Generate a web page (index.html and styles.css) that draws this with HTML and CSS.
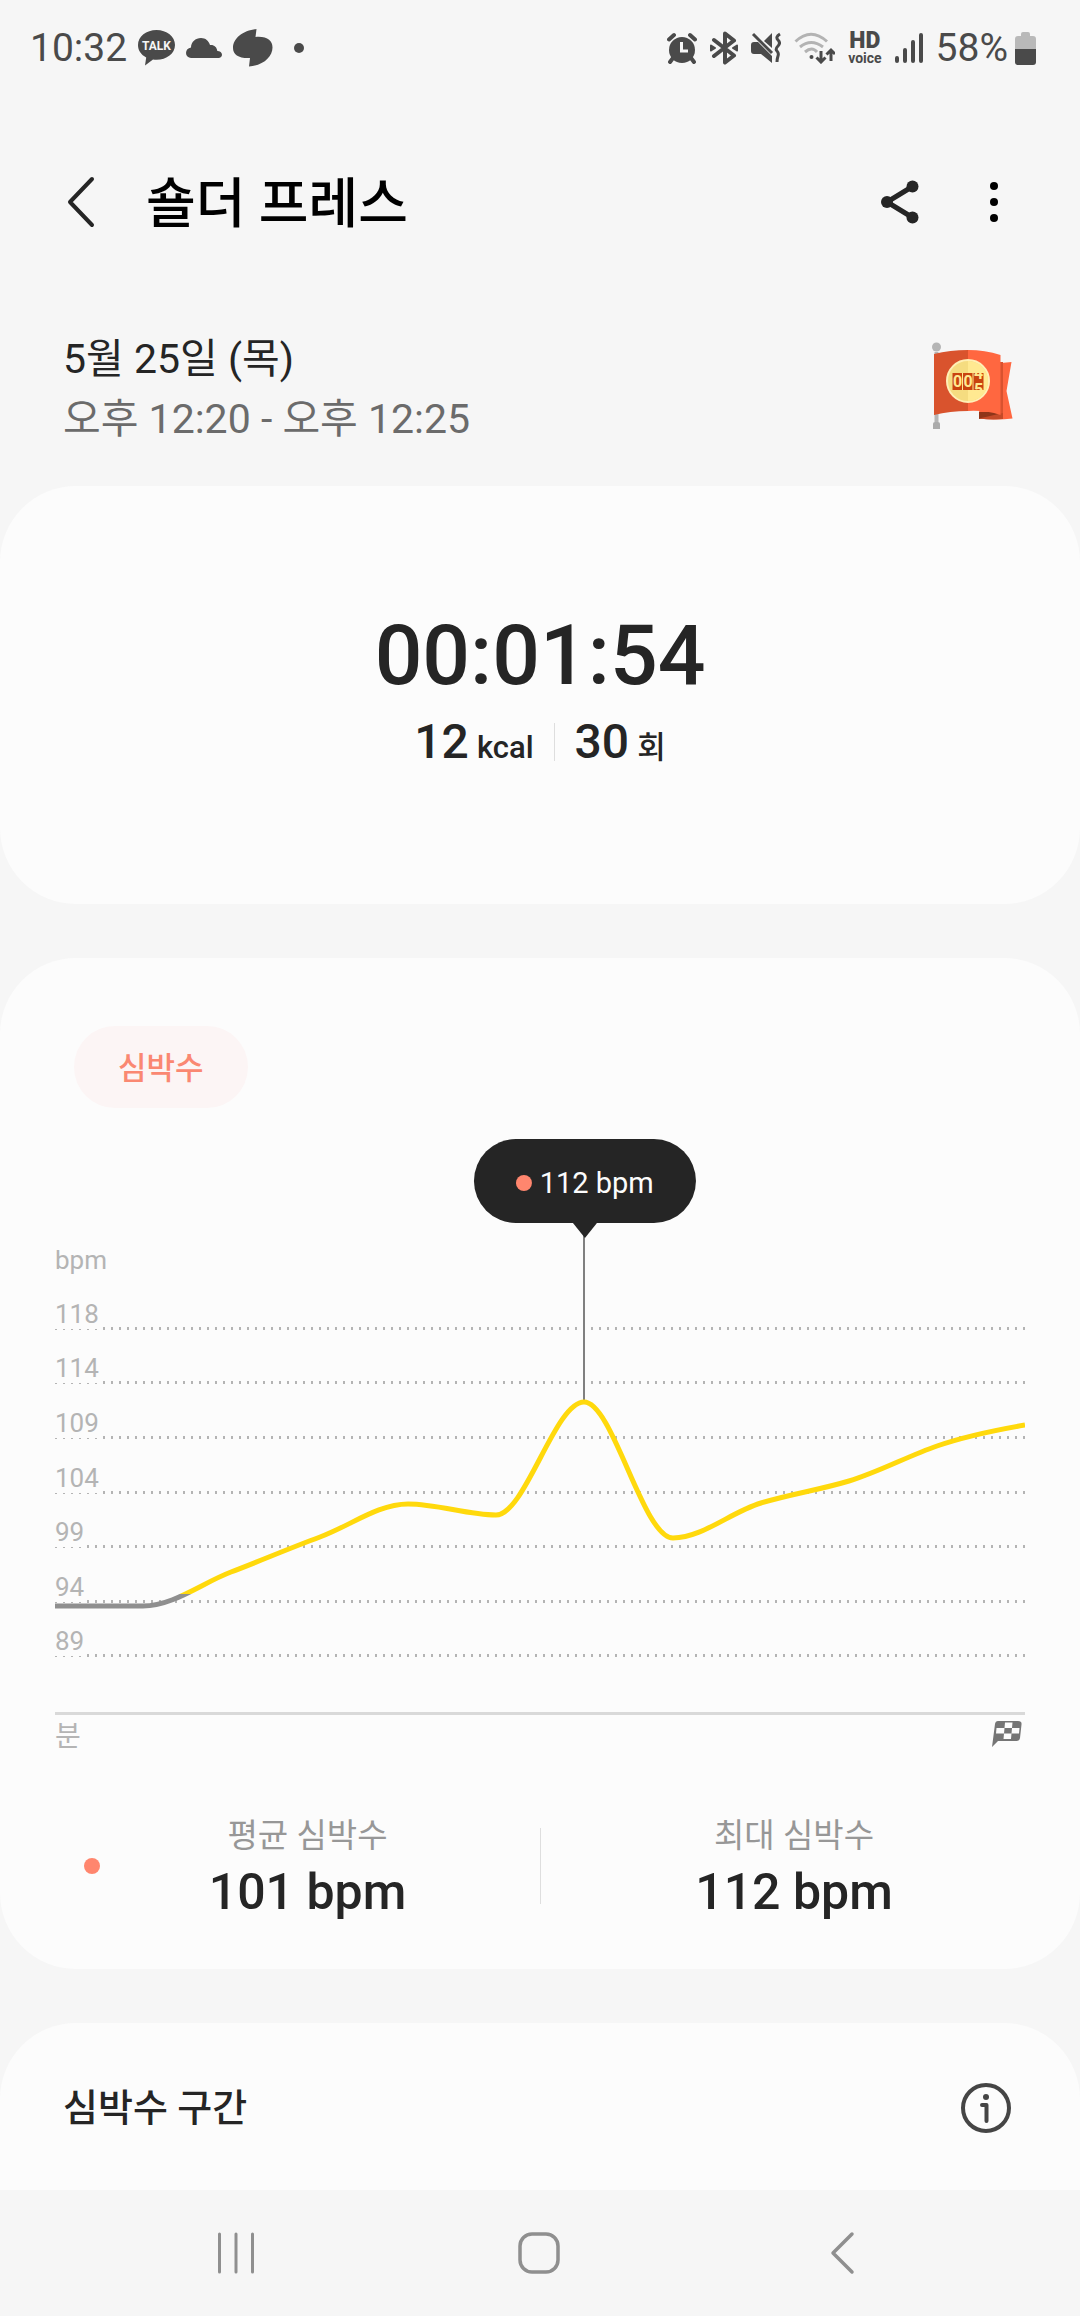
FILE: index.html
```html
<!DOCTYPE html>
<html lang="ko">
<head>
  <meta charset="UTF-8">
  <meta name="viewport" content="width=device-width, initial-scale=1.0">
  <title>숄더 프레스</title>
  <link rel="stylesheet" href="styles.css">
</head>
<body>
  <!-- Status bar -->
  <div class="status-bar">
    <div class="status-left">
      <span class="status-text">10:32</span>
      <svg class="talk-icon" width="37" height="36" viewBox="0 0 37 36">
        <path d="M18.500 0C8.300 0 0 6.500 0 15c0 5.500 3.200 9.800 8.200 12.400L7 35.500l8-6c1.200.2 2.300.3 3.500.3C28.700 29.800 37 23.500 37 15S28.700 0 18.500 0z" fill="#4a4a4a"/>
        <text x="18.500" y="20" text-anchor="middle" class="talk-text">TALK</text>
      </svg>
      <svg class="cloud-icon" width="36" height="20" viewBox="0 0 36 20">
        <path d="M5 20a5 5 0 0 1-5-5c0-3 2-5 5-5.500C5 4 9.500 0 15 0c4.500 0 7.800 2.800 9 7 4-.5 7 2.200 7.300 6C34 13 36 14.500 36 16.800 36 18.700 34.500 20 32.500 20z" fill="#4a4a4a"/>
      </svg>
      <svg class="leaf-icon" width="40" height="38" viewBox="0 0 40 38">
        <path d="M23.500 0 22.500 8C34 7 39.500 11.500 39.500 18.500 39.500 28 30 36.500 16 37.500L17 29C6 29.500 0 26 0 19 0 9.500 10 1.500 23.500 0z" fill="#4a4a4a"/>
      </svg>
      <span class="more-dot"></span>
    </div>
    <div class="status-right">
      <svg width="30" height="32" viewBox="0 0 30 32">
        <path d="M2 7.500 7 3M28 7.500 23 3M6 26l-3 4M24 26l3 4" stroke="#4a4a4a" stroke-width="4" stroke-linecap="round"/>
        <circle cx="15" cy="18" r="13" fill="#4a4a4a"/>
        <path d="M14.500 10v9H21" fill="none" stroke="#f6f6f6" stroke-width="3"/>
      </svg>
      <svg width="28" height="34" viewBox="0 0 28 34">
        <path d="M4 9l20 15.500-9 7V2.500l9 7L4 25" fill="none" stroke="#4a4a4a" stroke-width="4" stroke-linejoin="round" stroke-linecap="round"/>
        <path d="M1 14.500l4 2.500-4 2.500zM27 14.500 23 17l4 2.500z" fill="#4a4a4a" stroke="#4a4a4a" stroke-width="2" stroke-linejoin="round"/>
      </svg>
      <svg width="30" height="32" viewBox="0 0 30 32">
        <path d="M0 13q0-3 3-3h4l14 14v7l-11-9H3q-3 0-3-3zM13 9l8-8v15z" fill="#4a4a4a"/>
        <path d="M2 2l19 19" stroke="#4a4a4a" stroke-width="3"/>
        <path d="M29 2q-5 3-2 6t0 6-1 5 1 5-1 6" fill="none" stroke="#4a4a4a" stroke-width="3"/>
      </svg>
      <svg width="41" height="32" viewBox="0 0 41 32">
        <path d="M1.500 9.500Q17-5 33 9.500M6 15q11-9 23 0M11 20q7-6 12 0" fill="none" stroke="#b3b3b3" stroke-width="3"/>
        <circle cx="17.500" cy="25" r="2" fill="#4a4a4a"/>
        <path d="M27 19v10M22.500 25.500l4.500 4.500 4.500-4.500M37 29V19M32.500 22.500 37 18l4 4" fill="none" stroke="#4a4a4a" stroke-width="3"/>
      </svg>
      <div class="hd-voice"><b>HD</b><span>voice</span></div>
      <svg width="28" height="30" viewBox="0 0 28 30">
        <path d="M2 25v3M10 17v11M18 9v19M26 2v26" stroke="#4a4a4a" stroke-width="4" stroke-linecap="round"/>
      </svg>
      <span class="status-text battery-text">58%</span>
      <svg width="21" height="33" viewBox="0 0 21 33">
        <path d="M6 4V2q0-2 2-2h5q2 0 2 2v2h3q3 0 3 3v10H0V7q0-3 3-3z" fill="#b9b9b9"/>
        <path d="M0 17h21v13q0 3-3 3H3q-3 0-3-3z" fill="#4a4a4a"/>
      </svg>
    </div>
  </div>

  <!-- App bar -->
  <header class="app-bar">
    <button class="icon-button" aria-label="뒤로">
      <svg width="30" height="52" viewBox="0 0 30 52">
        <path d="M26 3 4 26l22 23" fill="none" stroke="#252525" stroke-width="4" stroke-linecap="round" stroke-linejoin="round"/>
      </svg>
    </button>
    <h1>숄더 프레스</h1>
    <button class="icon-button share" aria-label="공유">
      <svg width="38" height="44" viewBox="0 0 38 44">
        <path d="M31.500 6.500 6 22l25.500 15.500" fill="none" stroke="#252525" stroke-width="5"/>
        <circle cx="31.500" cy="6.500" r="6" fill="#252525"/>
        <circle cx="6" cy="22" r="6" fill="#252525"/>
        <circle cx="31.500" cy="37.500" r="6" fill="#252525"/>
      </svg>
    </button>
    <button class="icon-button" aria-label="더보기">
      <svg width="10" height="44" viewBox="0 0 10 44">
        <circle cx="5" cy="6" r="4"/>
        <circle cx="5" cy="22" r="4"/>
        <circle cx="5" cy="38" r="4"/>
      </svg>
    </button>
  </header>

  <!-- Date and goal badge -->
  <section class="session">
    <div class="session-when">
      <p class="session-date">5월 25일 (목)</p>
      <p class="session-time">오후 12:20 - 오후 12:25</p>
    </div>
    <svg width="82" height="88" viewBox="0 0 82 88">
      <path d="M48 22q16 0 31.500-2L74.500 49l6 27.500q-16 2-33.500 0z" fill="#ff6740"/>
      <path d="M68 20h3v57h-3z" fill="#d9522f"/>
      <path d="M47 70h21v4l-21 3z" fill="#8f3519"/>
      <path d="M47 76.500q12 1.500 24 .5V71z" fill="#c44a28"/>
      <path d="M2.500 10h4v70h-4z" fill="#b5b5b5"/>
      <circle cx="4.500" cy="5" r="4.500" fill="#b5b5b5"/>
      <path d="M1 82q0-2 2-2h3q2 0 2 2v5H1z" fill="#ababab"/>
      <path d="M2 12Q18 8 36 8v61q-18 0-34 4z" fill="#d9532d"/>
      <path d="M36 8q17 0 32.500 5v60Q53 68 36 69z" fill="#ff6740"/>
      <circle cx="36" cy="39" r="21" fill="#f5dc80" stroke="#ffefb5" stroke-width="2"/>
      <path d="M36 19a20 20 0 0 1 0 40z" fill="#ffe991"/>
      <path d="M20.500 31h31v17h-31z" fill="#c9430f"/>
      <path d="M30.500 31v17M41 31v17" stroke="#ffe991"/>
      <text x="21" y="45" class="flag-digit">0</text>
      <text x="31.500" y="45" class="flag-digit">0</text>
      <svg x="41" y="31" width="11" height="17">
        <text x="1" y="6" class="flag-digit">4</text>
        <text x="1" y="22" class="flag-digit">5</text>
      </svg>
    </svg>
  </section>

  <main>
    <!-- Duration -->
    <section class="card summary">
      <div class="duration">00:01:54</div>
      <div class="totals">
        <span class="total">12 <small>kcal</small></span>
        <i class="divider"></i>
        <span class="total">30 <small>회</small></span>
      </div>
    </section>

    <!-- Heart rate chart -->
    <section class="card heart-rate">
      <button class="chip">심박수</button>
      <div class="chart">
        <div class="unit">bpm</div>
        <div class="plot">
          <ul class="grid">
            <li><span>118</span></li>
            <li><span>114</span></li>
            <li><span>109</span></li>
            <li><span>104</span></li>
            <li><span>99</span></li>
            <li><span>94</span></li>
            <li><span>89</span></li>
            <li></li>
          </ul>
          <div class="marker">
            <div class="bubble"><i class="dot"></i>112 bpm</div>
          </div>
          <svg class="line" viewBox="0 0 970 437" preserveAspectRatio="none">
            <defs>
              <linearGradient id="zone" gradientUnits="userSpaceOnUse" x1="0" y1="0" x2="0" y2="437">
                <stop offset="0.730" stop-color="#ffd90c"/>
                <stop offset="0.730" stop-color="#8f8f8f"/>
              </linearGradient>
            </defs>
            <path d="M0 331H88C118 331 147 308 176 297S235 273 265 262 323 229 353 229 412 240 441 240C470 240 500 127 529 127S588 263 618 263C647 263 676 237 706 228S764 215 794 206 853 181 882 171 941 155 970 150" fill="none" stroke="url(#zone)" stroke-width="5"/>
          </svg>
        </div>
        <div class="x-axis">
          <span>분</span>
          <svg width="32" height="28" viewBox="0 0 32 28">
            <path d="M7 1h20q4 0 3.500 3.500L29 18q-.5 3-3.500 3H7l-6 6L4 4q.5-3 3-3z" fill="#757575"/>
            <path d="M14 2.500h7.500L21 8h-7.500zM5.500 8h8l-.5 5.500H5zM21 8h7.500l-.5 5.500h-7.500zM13 13.500h7.500L20 19h-7.500z" fill="#fcfcfc"/>
          </svg>
        </div>
      </div>
      <div class="stats">
        <div class="stat average">
          <i class="dot"></i>
          <dl>
            <dt>평균 심박수</dt>
            <dd>101 bpm</dd>
          </dl>
        </div>
        <div class="stat maximum">
          <i class="divider"></i>
          <dl>
            <dt>최대 심박수</dt>
            <dd>112 bpm</dd>
          </dl>
        </div>
      </div>
    </section>

    <!-- Heart rate zones -->
    <section class="card zones">
      <h2>심박수 구간</h2>
      <button class="icon-button" aria-label="정보">
        <svg width="54" height="54" viewBox="0 0 54 54">
          <circle cx="27" cy="27" r="23" fill="none" stroke="#454545" stroke-width="4"/>
          <circle cx="27" cy="16" r="3" fill="#454545"/>
          <path d="M23 24h4.500v16" fill="none" stroke="#454545" stroke-width="4" stroke-linecap="round" stroke-linejoin="round"/>
        </svg>
      </button>
    </section>
  </main>

  <!-- System navigation -->
  <nav class="nav-bar">
    <button class="icon-button" aria-label="최근 앱">
      <svg width="38" height="44" viewBox="0 0 38 44">
        <path d="M2.500 3v38M19 3v38M35.500 3v38" stroke="#8f8f8f" stroke-width="3" stroke-linecap="round"/>
      </svg>
    </button>
    <button class="icon-button" aria-label="홈">
      <svg width="44" height="44" viewBox="0 0 44 44">
        <rect x="3" y="3" width="38" height="38" rx="12" fill="none" stroke="#8f8f8f" stroke-width="3.500"/>
      </svg>
    </button>
    <button class="icon-button" aria-label="뒤로 가기">
      <svg width="26" height="44" viewBox="0 0 26 44">
        <path d="M23 3 4 22l19 19" fill="none" stroke="#8f8f8f" stroke-width="3.500" stroke-linecap="round" stroke-linejoin="round"/>
      </svg>
    </button>
  </nav>
</body>
</html>
```

FILE: styles.css
```css
* {
  box-sizing: border-box;
}
body {
  margin: 0;
  min-height: 100vh;
  display: flex;
  flex-direction: column;
  background-color: #f6f6f6;
  color: #252525;
  font-family: Roboto, "Noto Sans CJK KR", sans-serif;
}
h1, h2, p, ul, dl, dd {
  margin: 0;
  padding: 0;
}
svg {
  display: block;
  flex: none;
}
button {
  padding: 0;
  border: none;
  background: none;
  font-family: inherit;
  cursor: pointer;
}

/* Status bar */
.status-bar {
  display: flex;
  justify-content: space-between;
  align-items: center;
  height: 96px;
  padding: 0 44px 0 30px;
  color: #4a4a4a;
}
.status-left,
.status-right {
  display: flex;
  align-items: center;
}
.status-left {
  gap: 11px;
}
.status-right {
  gap: 13px;
}
.status-text {
  font-size: 39px;
  line-height: 48px;
}
.battery-text {
  margin-right: -6px;
}
.talk-text {
  font-size: 12px;
  font-weight: 700;
  fill: #f6f6f6;
}
.more-dot {
  width: 10px;
  height: 10px;
  margin-left: 10px;
  border-radius: 50%;
  background-color: #4a4a4a;
}
.hd-voice {
  display: flex;
  flex-direction: column;
  align-items: center;
  font-size: 14px;
  font-weight: 700;
  line-height: 14px;
}
.hd-voice b {
  font-size: 23px;
  font-weight: 900;
  line-height: 20px;
}

/* App bar */
.app-bar {
  display: flex;
  align-items: center;
  height: 211px;
  padding: 0 81px 0 66px;
}
.app-bar h1 {
  flex: 1;
  margin-left: 50px;
  padding-top: 6px;
  color: #000;
  font-size: 54px;
  font-weight: 500;
  line-height: 72px;
}
.app-bar .share {
  margin-right: 70px;
}

/* Session date */
.session {
  display: flex;
  justify-content: space-between;
  align-items: center;
  height: 179px;
  padding: 0 66px 22px 63px;
}
.session-when {
  padding-top: 6px;
}
.session p {
  font-size: 41px;
  line-height: 60px;
}
.session-time {
  color: #6b6b6b;
}
.flag-digit {
  font-size: 16px;
  font-weight: 700;
  fill: #ffe991;
}

/* Cards */
main {
  flex: 1;
  display: flex;
  flex-direction: column;
  gap: 54px;
}
.card {
  border-radius: 76px;
  background-color: #fcfcfc;
}
.summary {
  display: flex;
  flex-direction: column;
  align-items: center;
  padding: 120px 0 126px;
  font-weight: 500;
}
.duration {
  font-size: 84px;
  line-height: 100px;
}
.totals {
  display: flex;
  align-items: center;
  gap: 20px;
}
.total {
  display: flex;
  align-items: baseline;
  gap: 8px;
  font-size: 48px;
  line-height: 72px;
}
.total small {
  font-size: 31px;
  line-height: 36px;
}
.divider {
  width: 1px;
  background-color: #dedede;
}
.totals .divider {
  height: 38px;
}

/* Heart rate */
.heart-rate {
  padding: 68px 0 45px;
}
.chip {
  height: 82px;
  margin-left: 74px;
  padding: 0 44px 3px;
  border-radius: 41px;
  background-color: #fcf5f5;
  color: #fa8872;
  font-size: 31px;
  font-weight: 500;
}
.dot {
  width: 16px;
  height: 16px;
  border-radius: 50%;
  background-color: #ff866e;
}
.chart {
  margin: 137px 55px 0;
  color: #b4b4b4;
  font-size: 26px;
}
.unit {
  line-height: 30px;
}
.plot {
  position: relative;
  height: 437px;
}
.grid {
  display: grid;
  grid-template-rows: repeat(8, 1fr);
  height: 100%;
  list-style: none;
}
.grid li {
  display: flex;
  align-items: flex-end;
  background: repeating-linear-gradient(to right, #b4b4b4 0 2px, transparent 2px 8px) left bottom / 100% 3px no-repeat;
}
.grid li:last-child {
  background: none;
}
.grid span {
  margin-bottom: 1px;
  background-color: #fcfcfc;
  line-height: 30px;
}
.line {
  position: absolute;
  top: 0;
  left: 0;
  width: 100%;
  height: 100%;
}
.marker {
  position: absolute;
  top: -136px;
  left: 54.4%;
  height: 262px;
  border-left: 2px solid #808080;
}
.bubble {
  display: flex;
  align-items: center;
  gap: 8px;
  height: 84px;
  padding: 4px 42px 0;
  border-radius: 42px;
  background-color: #252525;
  color: #fcfcfc;
  font-size: 29px;
  white-space: nowrap;
  transform: translateX(-50%);
}
.bubble::after {
  content: "";
  position: absolute;
  top: 84px;
  left: 50%;
  margin-left: -12px;
  border: 12px solid transparent;
  border-top: 15px solid #252525;
  border-bottom: 0;
}
.x-axis {
  display: flex;
  justify-content: space-between;
  padding: 5px 2px 0 0;
  border-top: 3px solid #d9d9d9;
  font-size: 28px;
  line-height: 34px;
}

/* Average and maximum */
.stats {
  display: grid;
  grid-template-columns: 1fr 1fr;
  margin-top: 54px;
}
.stats .divider {
  height: 76px;
}
.stat {
  display: flex;
  align-items: center;
}
.stat dl {
  flex: 1;
  padding-top: 4px;
  text-align: center;
}
.average {
  padding: 0 25px 0 84px;
}
.maximum {
  padding-right: 33px;
}
.stat dt {
  color: #979797;
  font-size: 33px;
  line-height: 48px;
}
.stat dd {
  font-size: 50px;
  font-weight: 500;
  line-height: 64px;
}

/* Zones */
.zones {
  flex: 1;
  display: flex;
  justify-content: space-between;
  align-items: center;
  padding: 3px 67px 0 63px;
  border-radius: 76px 76px 0 0;
}
.zones h2 {
  font-size: 38px;
  font-weight: 500;
  line-height: 56px;
}

/* Navigation */
.nav-bar {
  display: flex;
  align-items: center;
  height: 126px;
  padding: 0 87px 0 85px;
}
.nav-bar button {
  flex: 1;
  display: flex;
  justify-content: center;
}
```
